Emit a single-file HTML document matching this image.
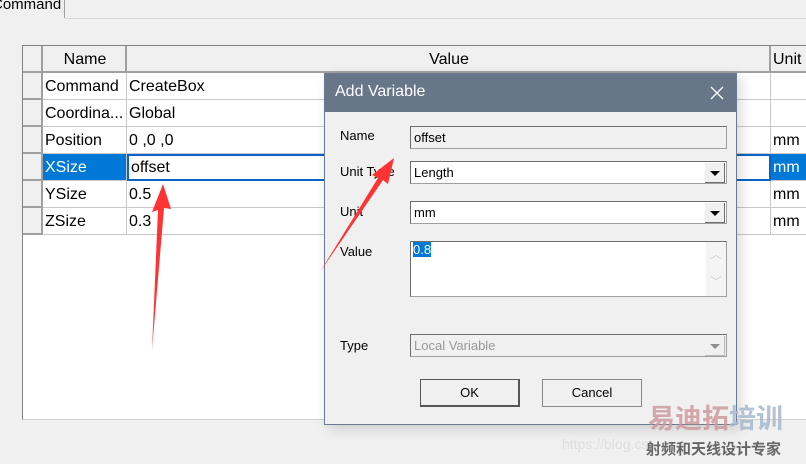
<html><head><style>
body{margin:0;width:806px;height:464px;background:#f0f0f0;font-family:"Liberation Sans",sans-serif;position:relative;overflow:hidden}
.a{position:absolute}
.t{font-size:15px;color:#000}
.cell{position:absolute;height:27px;box-sizing:border-box;border-right:1px solid #c8c8c8;border-bottom:1px solid #c8c8c8;font-size:16px;line-height:27px;padding-left:2px;white-space:nowrap;overflow:hidden}
.rh{background:#f0f0f0;border-right:2px solid #a0a0a0;border-bottom:2px solid #a0a0a0}
.d{font-size:13px;color:#000}
.box{position:absolute;box-sizing:border-box;border:1px solid #a0a0a0;border-top-color:#6d6d6d;border-left-color:#6d6d6d;font-size:13px;line-height:21px;padding-left:3px}
.dd{position:absolute;right:1px;top:1px;width:19px;height:19px;background:#f0f0f0;border-right:1px solid #6d6d6d;border-bottom:1px solid #6d6d6d}
.dd:after{content:"";position:absolute;left:5px;top:8px;border:5px solid transparent;border-top:5px solid #000;border-bottom:0}
.btn{position:absolute;box-sizing:border-box;border:1px solid #888;background:#f0f0f0;font-size:13px;text-align:center;line-height:25px}
</style></head><body>
<div class="a t" style="left:-8px;top:-4px;font-size:15px">Command</div>
<div class="a" style="left:64px;top:0;width:1px;height:18px;background:#a0a0a0"></div>
<div class="a" style="left:65px;top:18px;width:741px;height:1px;background:#d8d8d8"></div>
<div class="a" style="left:22px;top:45px;width:790px;height:373px;background:#fff;border-left:1px solid #808080;border-top:1px solid #808080;border-bottom:1px solid #d0d0d0"></div>
<div class="cell rh" style="left:23px;top:46px;width:20px"></div>
<div class="cell rh" style="left:43px;top:46px;width:84px;text-align:center">Name</div>
<div class="cell rh" style="left:127px;top:46px;width:644px;text-align:center">Value</div>
<div class="cell rh" style="left:771px;top:46px;width:50px">Unit</div>
<div class="cell rh" style="left:23px;top:73px;width:20px"></div><div class="cell" style="left:43px;top:73px;width:84px">Command</div><div class="cell" style="left:127px;top:73px;width:644px">CreateBox</div><div class="cell" style="left:771px;top:73px;width:40px"></div>
<div class="cell rh" style="left:23px;top:100px;width:20px"></div><div class="cell" style="left:43px;top:100px;width:84px">Coordina...</div><div class="cell" style="left:127px;top:100px;width:644px">Global</div><div class="cell" style="left:771px;top:100px;width:40px"></div>
<div class="cell rh" style="left:23px;top:127px;width:20px"></div><div class="cell" style="left:43px;top:127px;width:84px">Position</div><div class="cell" style="left:127px;top:127px;width:644px">0 ,0 ,0</div><div class="cell" style="left:771px;top:127px;width:40px">mm</div>
<div class="cell rh" style="left:23px;top:154px;width:20px"></div><div class="cell" style="left:43px;top:154px;width:84px;background:#0078d7;color:#fff">XSize</div><div class="cell" style="left:127px;top:154px;width:644px;border:2px solid #0a64c8;line-height:24px">offset</div><div class="cell" style="left:771px;top:154px;width:40px;background:#0078d7;color:#fff">mm</div>
<div class="cell rh" style="left:23px;top:181px;width:20px"></div><div class="cell" style="left:43px;top:181px;width:84px">YSize</div><div class="cell" style="left:127px;top:181px;width:644px">0.5</div><div class="cell" style="left:771px;top:181px;width:40px">mm</div>
<div class="cell rh" style="left:23px;top:208px;width:20px"></div><div class="cell" style="left:43px;top:208px;width:84px">ZSize</div><div class="cell" style="left:127px;top:208px;width:644px">0.3</div><div class="cell" style="left:771px;top:208px;width:40px">mm</div>
<div class="a" style="left:324px;top:73px;width:413px;height:352px;background:#f0f0f0;border:1px solid #6a7a90;box-sizing:border-box;box-shadow:4px 4px 12px rgba(0,0,0,.15)">
<div class="a" style="left:0;top:0;width:411px;height:38px;background:#687689"></div>
<div class="a" style="left:10px;top:9px;font-size:16px;color:#fff">Add Variable</div>
<svg class="a" style="left:385px;top:12px" width="14" height="14"><path d="M1 1L13 13M13 1L1 13" stroke="#fff" stroke-width="1.3"/></svg>
<div class="a d" style="left:15px;top:54px">Name</div>
<div class="a d" style="left:15px;top:90px">Unit Type</div>
<div class="a d" style="left:15px;top:130px">Unit</div>
<div class="a d" style="left:15px;top:170px">Value</div>
<div class="a d" style="left:15px;top:264px">Type</div>
<div class="box" style="left:85px;top:52px;width:317px;height:23px;background:#f0f0f0">offset</div>
<div class="box" style="left:85px;top:87px;width:317px;height:23px;background:#fff">Length<div class="dd"></div></div>
<div class="box" style="left:85px;top:127px;width:317px;height:23px;background:#fff">mm<div class="dd"></div></div>
<div class="box" style="left:85px;top:167px;width:317px;height:56px;background:#fff;padding-left:2px"><span style="background:#0078d7;color:#fff;line-height:15px">0.8</span>
<div class="a" style="right:0;top:0;width:20px;height:54px;background:#f4f4f4;color:#ccc;font-size:11px;text-align:center;line-height:27px">︿<br>﹀</div></div>
<div class="box" style="left:85px;top:260px;width:317px;height:23px;background:#f0f0f0;color:#999">Local Variable<div class="dd" style="opacity:.4"></div></div>
<div class="btn" style="left:95px;top:305px;width:100px;height:28px;border:1px solid #555;border-right-width:2px;border-bottom-width:2px">OK</div>
<div class="btn" style="left:217px;top:305px;width:100px;height:28px">Cancel</div>
</div>
<div class="a" style="left:648px;top:402px;font-size:27px;font-weight:bold;font-family:'Noto Sans CJK SC',sans-serif;line-height:30px;opacity:.85"><span style="color:#cf9a9e">易迪拓</span><span style="color:#a6b9cd">培训</span></div>
<div class="a" style="left:646px;top:438px;font-size:15px;font-weight:bold;color:#666;font-family:'Noto Sans CJK SC',sans-serif">射频和天线设计专家</div>
<div class="a" style="left:562px;top:436px;font-size:14px;color:#ddd">https://blog.cs</div>
<svg class="a" style="left:0;top:0" width="806" height="464">
<polygon points="152,350 158,210 152,212 163,184 171,209 164,208" fill="#f33"/>
<polygon points="320,272 378,178 372,175 394,158 388,184 383,180" fill="#f33"/>
</svg>
</body></html>
